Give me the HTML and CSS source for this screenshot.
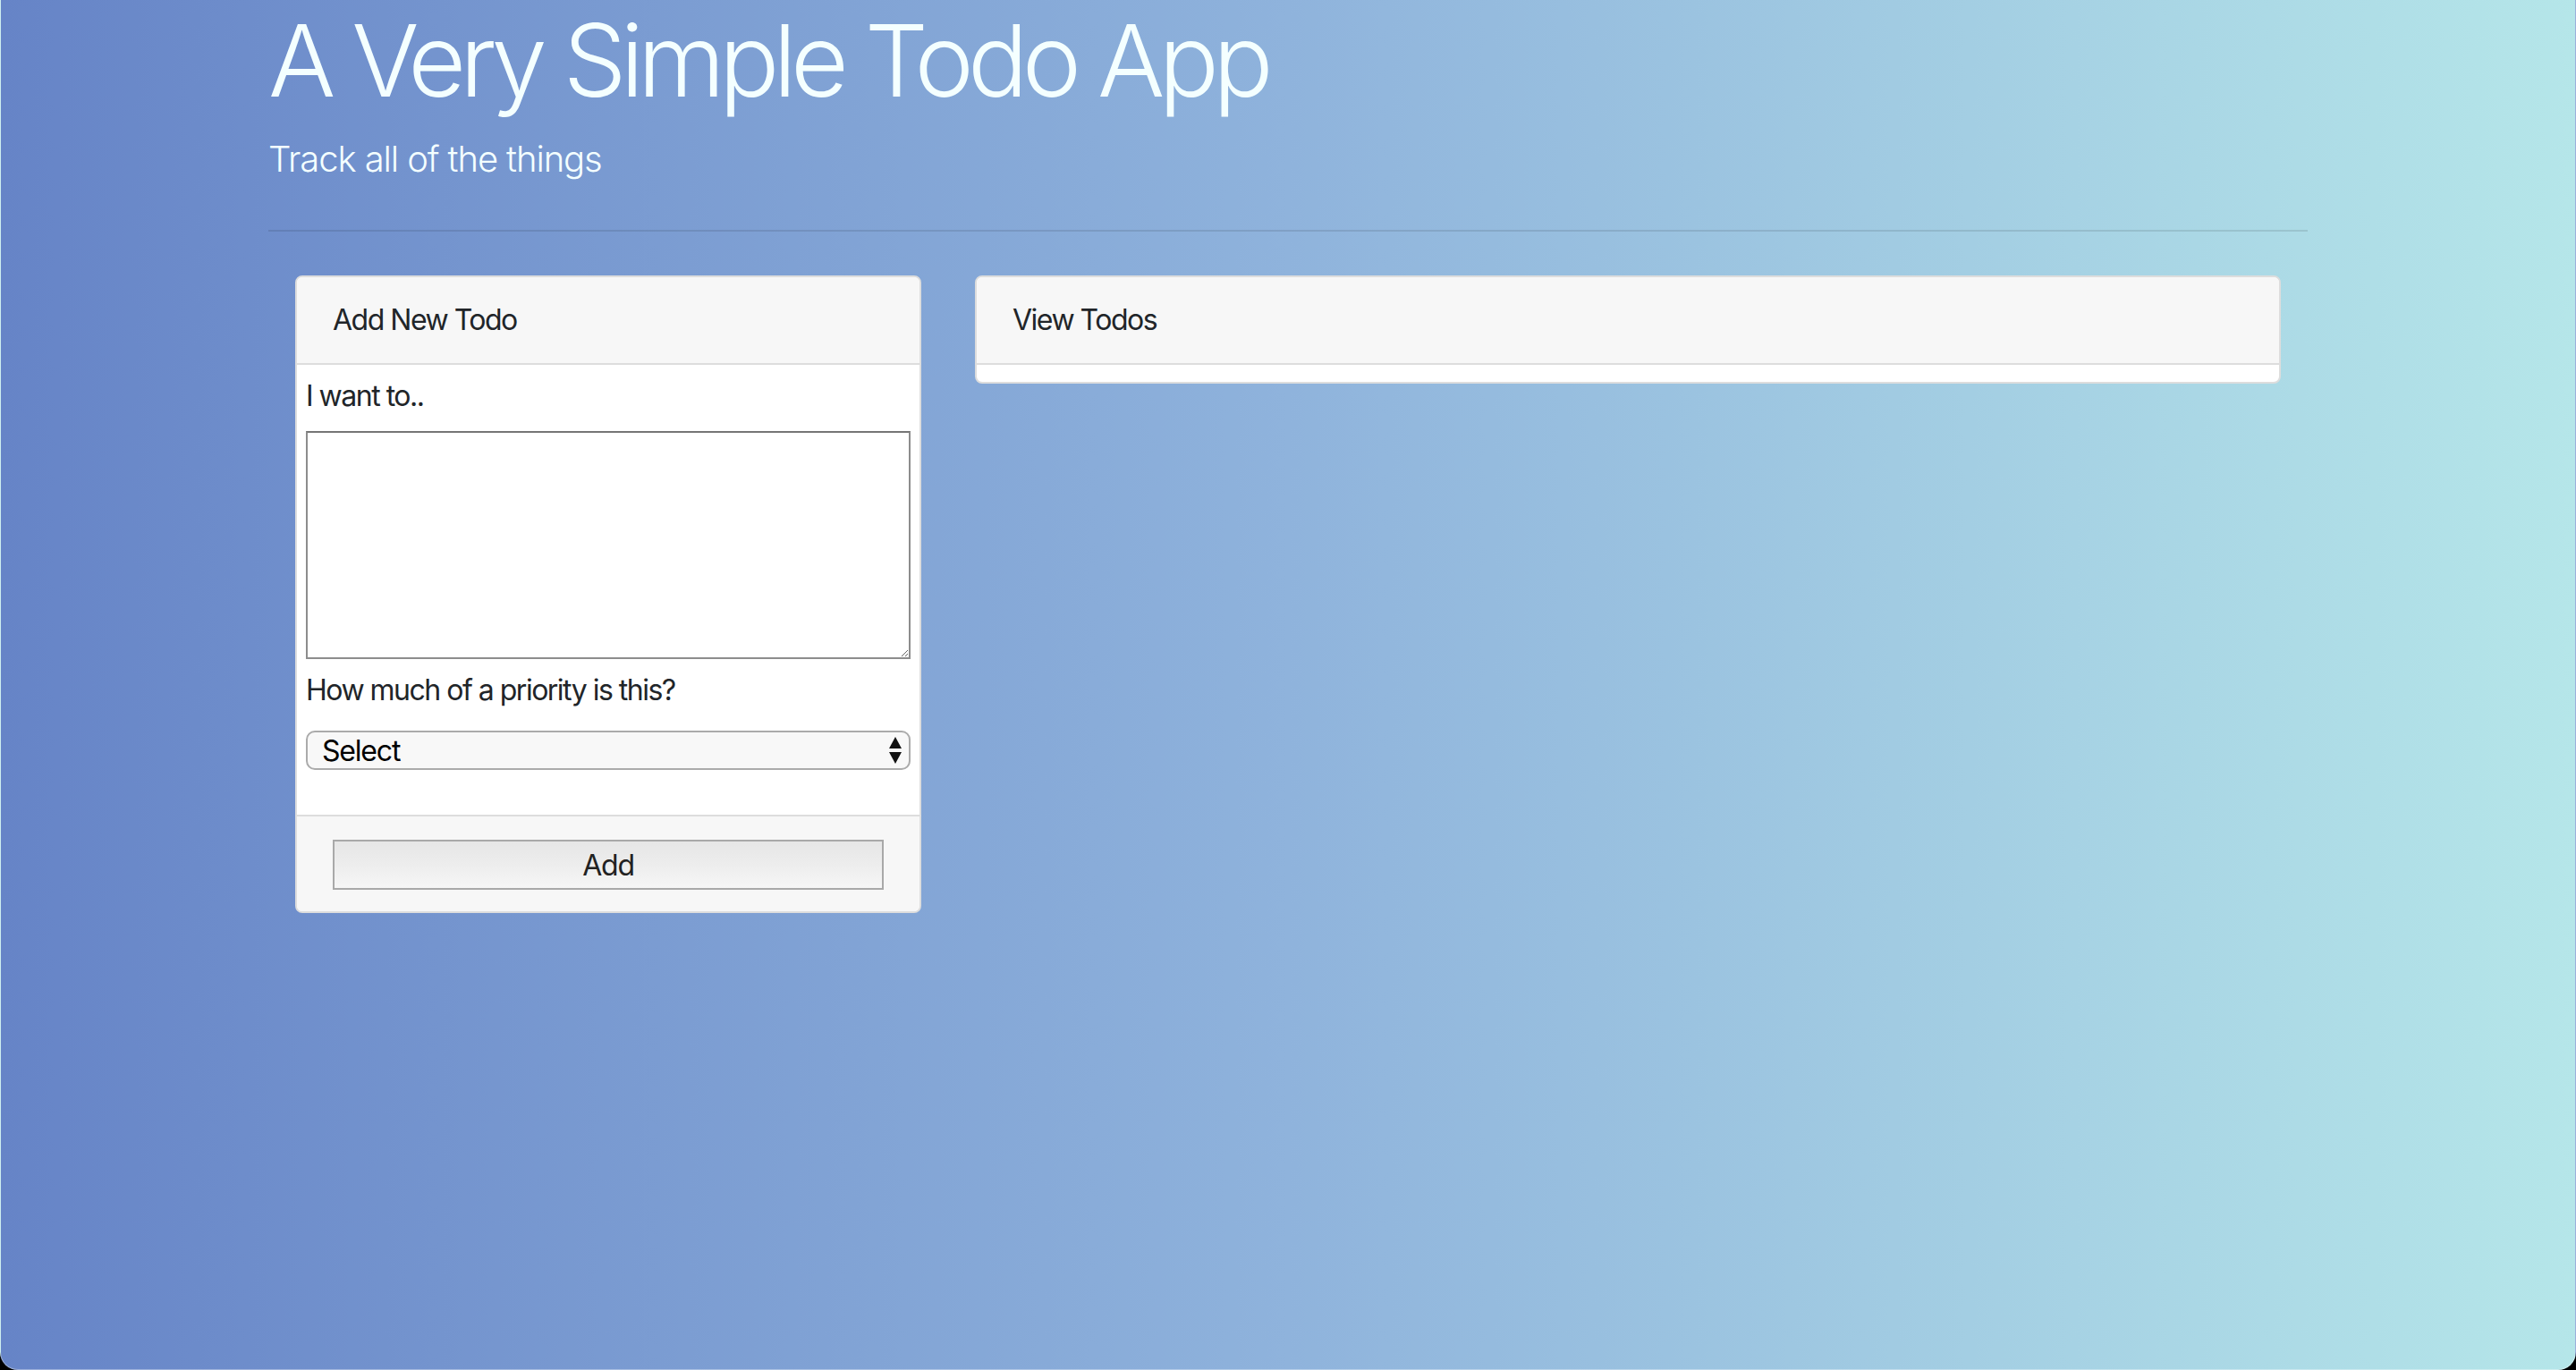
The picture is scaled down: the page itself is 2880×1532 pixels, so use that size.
FILE: index.html
```html
<!DOCTYPE html>
<html lang="en">
<head>
<meta charset="utf-8">
<title>A Very Simple Todo App</title>
<link rel="stylesheet" href="styles.css">
</head>
<body>
<div class="window">
  <div class="container">
    <header class="jumbo">
      <h1 class="title">A Very Simple Todo App</h1>
      <p class="lead">Track all of the things</p>
    </header>
    <hr class="divider">
    <div class="row">
      <div class="col col-side">
        <section class="card">
          <div class="card-header">Add New Todo</div>
          <div class="card-body">
            <label class="field-label" for="todo-text">I want to..</label>
            <textarea id="todo-text" class="todo-text"></textarea>
            <label class="field-label field-label-2" for="priority">How much of a priority is this?</label>
            <div class="select-wrap">
              <select id="priority" class="priority">
                <option>Select</option>
                <option>Low</option>
                <option>Medium</option>
                <option>High</option>
              </select>
              <svg class="select-arrows" width="14" height="30" viewBox="0 0 14 30" aria-hidden="true">
                <path d="M7 0 L14 13 L0 13 Z" fill="#111"/>
                <path d="M0 17 L14 17 L7 30 Z" fill="#111"/>
              </svg>
            </div>
          </div>
          <div class="card-footer">
            <button class="add-btn" type="button">Add</button>
          </div>
        </section>
      </div>
      <div class="col col-main">
        <section class="card">
          <div class="card-header">View Todos</div>
          <div class="card-body card-body-empty"></div>
        </section>
      </div>
    </div>
  </div>
</div>
</body>
</html>
```
FILE: styles.css
```css
html {
  background: #000;
}
body {
  margin: 0;
  font-family: Inter, "Noto Sans", "Liberation Sans", sans-serif;
  color: #212529;
}
.window {
  box-sizing: border-box;
  min-height: 1532px;
  background: linear-gradient(90deg, #6684c7 0%, #8fb3dc 50%, #b5e6e9 100%);
  border-left: 1px solid rgba(255, 255, 255, 0.35);
  border-right: 1px solid rgba(255, 255, 255, 0.35);
  border-bottom: 1px solid rgba(255, 255, 255, 0.35);
  border-radius: 0 0 20px 20px;
  overflow: hidden;
}
.container {
  width: 2280px;
  margin: 0 auto;
}
.jumbo {
  color: #f4ffff;
}
.title {
  margin: 0;
  font-size: 112px;
  font-weight: 300;
  line-height: 1.2;
  letter-spacing: -6.8px;
}
.lead {
  margin: 14px 0 0;
  font-size: 40px;
  font-weight: 300;
  line-height: 60px;
  letter-spacing: -1.1px;
}
.divider {
  margin: 49px 0 0;
  border: 0;
  border-top: 2px solid rgba(0, 0, 0, 0.1);
}
.row {
  display: flex;
  align-items: flex-start;
  margin-top: 49px;
}
.col {
  box-sizing: border-box;
  padding: 0 30px;
}
.col-side {
  flex: 0 0 33.3333%;
}
.col-main {
  flex: 0 0 66.6667%;
}
.card {
  background: #fff;
  border: 2px solid #dddddd;
  border-radius: 8px;
  overflow: hidden;
}
.card-header {
  background: #f7f7f7;
  border-bottom: 2px solid #dddddd;
  padding: 24px 40px 24px;
  font-size: 32px;
  line-height: 48px;
  letter-spacing: -1.5px;
  color: #212529;
}
.card-body {
  padding: 11px 10px 50px;
}
.card-body-empty {
  padding: 0;
  height: 19px;
}
.field-label {
  display: block;
  font-size: 32px;
  line-height: 48px;
  letter-spacing: -1.5px;
  margin-bottom: 15px;
  color: #212529;
}
.field-label-2 {
  margin-top: 11px;
  margin-bottom: 21px;
}
.todo-text {
  display: block;
  box-sizing: border-box;
  width: 100%;
  height: 255px;
  margin: 0;
  border: 2px solid #8d8d8d;
  border-top-color: #767676;
  background: #fff;
  font-family: inherit;
  font-size: 28px;
}
.select-wrap {
  position: relative;
}
.priority {
  display: block;
  box-sizing: border-box;
  width: 100%;
  height: 44px;
  margin: 0;
  padding: 0 40px 0 16px;
  -webkit-appearance: none;
  appearance: none;
  background: #f8f8f8;
  border: 2px solid #ababab;
  border-radius: 10px;
  font-family: inherit;
  font-size: 32px;
  letter-spacing: -1.2px;
  color: #000;
}
.select-arrows {
  position: absolute;
  right: 10px;
  top: 7px;
  pointer-events: none;
}
.card-footer {
  background: #f7f7f7;
  border-top: 2px solid #dddddd;
  padding: 26px 40px 24px;
}
.add-btn {
  display: block;
  box-sizing: border-box;
  width: 100%;
  height: 56px;
  margin: 0;
  border: 2px solid #a9a9a9;
  border-radius: 0;
  background: linear-gradient(180deg, #e6e6e6 0%, #ededed 50%, #f6f6f6 100%);
  font-family: inherit;
  font-size: 32px;
  letter-spacing: -1.2px;
  color: #222;
}
```
